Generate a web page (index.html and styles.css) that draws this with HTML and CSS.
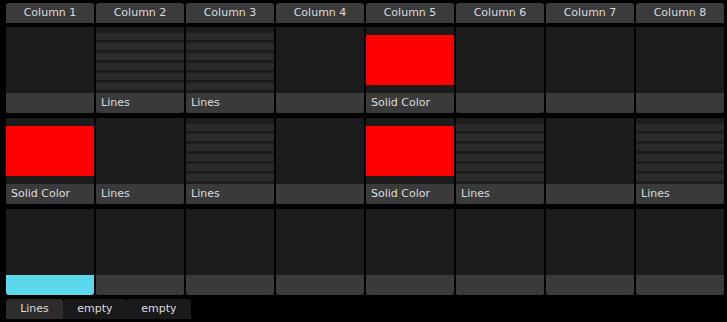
FILE: index.html
```html
<!DOCTYPE html>
<html lang="en">
<head>
  <meta charset="UTF-8" />
  <title>Clip Grid</title>
  <link rel="stylesheet" href="styles.css">
</head>
<body>
  <div class="deck">
    <div class="columns">
      <div class="col-head">Column 1</div>
      <div class="col-head">Column 2</div>
      <div class="col-head">Column 3</div>
      <div class="col-head">Column 4</div>
      <div class="col-head">Column 5</div>
      <div class="col-head">Column 6</div>
      <div class="col-head">Column 7</div>
      <div class="col-head">Column 8</div>
    </div>

    <div class="clips">
      <!-- row 1 -->
      <div class="clip"><div class="thumb"></div><div class="label"></div></div>
      <div class="clip"><div class="thumb"><div class="lines"></div></div><div class="label">Lines</div></div>
      <div class="clip"><div class="thumb"><div class="lines"></div></div><div class="label">Lines</div></div>
      <div class="clip"><div class="thumb"></div><div class="label"></div></div>
      <div class="clip"><div class="thumb"><div class="solid"></div></div><div class="label">Solid Color</div></div>
      <div class="clip"><div class="thumb"></div><div class="label"></div></div>
      <div class="clip"><div class="thumb"></div><div class="label"></div></div>
      <div class="clip"><div class="thumb"></div><div class="label"></div></div>
      <!-- row 2 -->
      <div class="clip"><div class="thumb"><div class="solid"></div></div><div class="label">Solid Color</div></div>
      <div class="clip"><div class="thumb"></div><div class="label">Lines</div></div>
      <div class="clip"><div class="thumb"><div class="lines"></div></div><div class="label">Lines</div></div>
      <div class="clip"><div class="thumb"></div><div class="label"></div></div>
      <div class="clip"><div class="thumb"><div class="solid"></div></div><div class="label">Solid Color</div></div>
      <div class="clip"><div class="thumb"><div class="lines"></div></div><div class="label">Lines</div></div>
      <div class="clip"><div class="thumb"></div><div class="label"></div></div>
      <div class="clip"><div class="thumb"><div class="lines"></div></div><div class="label">Lines</div></div>
      <!-- row 3 -->
      <div class="clip"><div class="thumb"></div><div class="label active"></div></div>
      <div class="clip"><div class="thumb"></div><div class="label"></div></div>
      <div class="clip"><div class="thumb"></div><div class="label"></div></div>
      <div class="clip"><div class="thumb"></div><div class="label"></div></div>
      <div class="clip"><div class="thumb"></div><div class="label"></div></div>
      <div class="clip"><div class="thumb"></div><div class="label"></div></div>
      <div class="clip"><div class="thumb"></div><div class="label"></div></div>
      <div class="clip"><div class="thumb"></div><div class="label"></div></div>
    </div>

    <div class="tabs">
      <div class="tab current">Lines</div>
      <div class="tab">empty</div>
      <div class="tab">empty</div>
    </div>
  </div>
</body>
</html>
```

FILE: styles.css
```css
body {
  margin: 0;
  background-color: #000;
  color: #dcdcdc;
  font-family: "DejaVu Sans", Verdana, sans-serif;
  font-size: 11px;
}
.deck {
  padding: 3px 3px 0 6px;
}
.columns,
.clips {
  display: grid;
  grid-template-columns: repeat(8, 88px);
  column-gap: 2px;
}
.col-head {
  height: 20px;
  line-height: 20px;
  text-align: center;
  background-color: #3b3b3b;
  border-radius: 3px 3px 0 0;
}
.clips {
  margin-top: 4px;
  row-gap: 5px;
}
.clip {
  height: 86px;
  display: flex;
  flex-direction: column;
  background-color: #1c1c1c;
}
.thumb {
  flex: 1;
  display: flex;
  flex-direction: column;
  justify-content: center;
}
.solid {
  height: 50px;
  background-color: #ff0000;
}
.lines {
  height: 58px;
  margin-top: 2px;
  background:
    repeating-linear-gradient(
      to bottom,
      #1e1e1e 0,
      #1e1e1e 1px,
      #2a2a2a 1px,
      #2a2a2a 8px,
      #1a1a1a 8px,
      #1a1a1a 10px
    );
}
.label {
  height: 20px;
  line-height: 20px;
  padding-left: 5px;
  background-color: #3a3a3a;
  border-radius: 0 0 3px 3px;
}
.label.active {
  background-color: #5bd8ec;
}
.tabs {
  display: flex;
  margin-top: 4px;
}
.tab {
  height: 20px;
  line-height: 20px;
  width: 64px;
  text-align: center;
  background-color: #1a1a1a;
  border-radius: 3px 3px 0 0;
}
.tab.current {
  width: 57px;
  background-color: #2c2c2c;
}
```
